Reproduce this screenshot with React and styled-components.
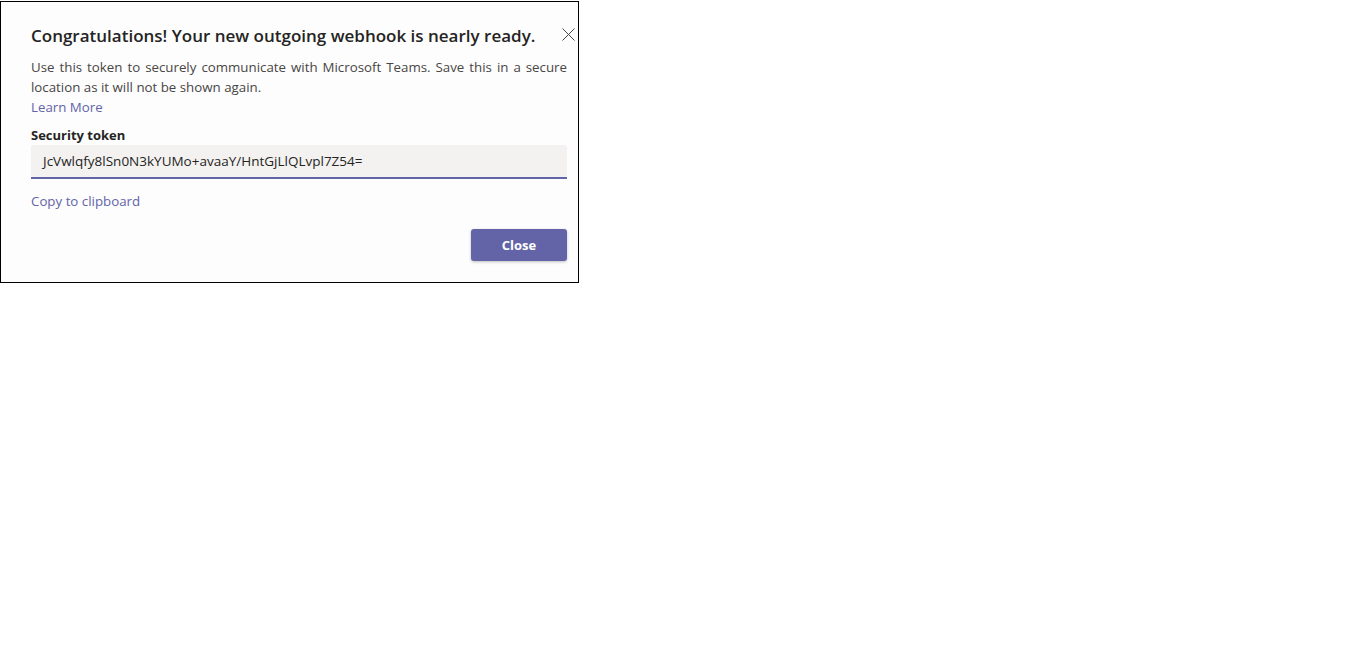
import React from 'react';
import styled, { createGlobalStyle } from 'styled-components';

const GlobalStyle = createGlobalStyle`
    body {
        margin: 0;
        background: #fff;
        font-family: "Open Sans", "Noto Sans", sans-serif;
    }
`;

const Dialog = styled.div`
    position: relative;
    box-sizing: border-box;
    margin-top: 1px;
    width: 579px;
    height: 282px;
    border: 1px solid #000;
    background: #fdfdfd;
    padding: 22px 11px 0 30px;
    display: flex;
    flex-direction: column;
`;

const Title = styled.h1`
    margin: 0;
    color: #252423;
    font-size: 17px;
    font-weight: 600;
    line-height: 24px;
`;

const Body = styled.p`
    margin: 9px 0 0;
    color: #484644;
    font-size: 13.3px;
    line-height: 20px;
    text-align: justify;
`;

const Link = styled.a`
    color: #6264a7;
    font-size: 13.3px;
    line-height: 20px;
    text-decoration: none;
    cursor: pointer;
    align-self: flex-start;
    margin-top: ${props => props.gap || 0}px;
`;

const Label = styled.label`
    margin-top: 8px;
    color: #252423;
    font-size: 13px;
    font-weight: 700;
    line-height: 20px;
`;

const TokenField = styled.div`
    height: 32px;
    box-sizing: content-box;
    background: #f3f2f1;
    border-radius: 3px 3px 0 0;
    border-bottom: 2px solid #6264a7;
    display: flex;
    align-items: center;
    padding: 0 12px;
    color: #252423;
    font-size: 13.5px;
`;

const Footer = styled.div`
    display: flex;
    justify-content: flex-end;
    margin-top: 18px;
`;

const Button = styled.button`
    width: 96px;
    height: 32px;
    border: none;
    border-radius: 3px;
    background: #6264a7;
    color: #fff;
    font-family: inherit;
    font-size: 13px;
    font-weight: 700;
    box-shadow: 0 1px 3px rgba(0, 0, 0, 0.25);
    cursor: pointer;
`;

const CloseIcon = styled.button`
    position: absolute;
    top: 23px;
    right: 1px;
    width: 18px;
    height: 18px;
    padding: 0;
    border: none;
    background: transparent;
    display: flex;
    align-items: center;
    justify-content: center;
    cursor: pointer;
`;

export default function App() {
    return (
        <>
            <GlobalStyle />
            <Dialog>
                <CloseIcon aria-label="Close">
                    <svg width="13" height="13" viewBox="0 0 13 13">
                        <path d="M0.5 0.5 L12.5 12.5 M12.5 0.5 L0.5 12.5" stroke="#484644" strokeWidth="1" fill="none" />
                    </svg>
                </CloseIcon>
                <Title>Congratulations! Your new outgoing webhook is nearly ready.</Title>
                <Body>
                    Use this token to securely communicate with Microsoft Teams. Save this in a secure location as it will not be shown again.
                </Body>
                <Link>Learn More</Link>
                <Label>Security token</Label>
                <TokenField>JcVwlqfy8lSn0N3kYUMo+avaaY/HntGjLlQLvpl7Z54=</TokenField>
                <Link gap={12}>Copy to clipboard</Link>
                <Footer>
                    <Button>Close</Button>
                </Footer>
            </Dialog>
        </>
    );
}
